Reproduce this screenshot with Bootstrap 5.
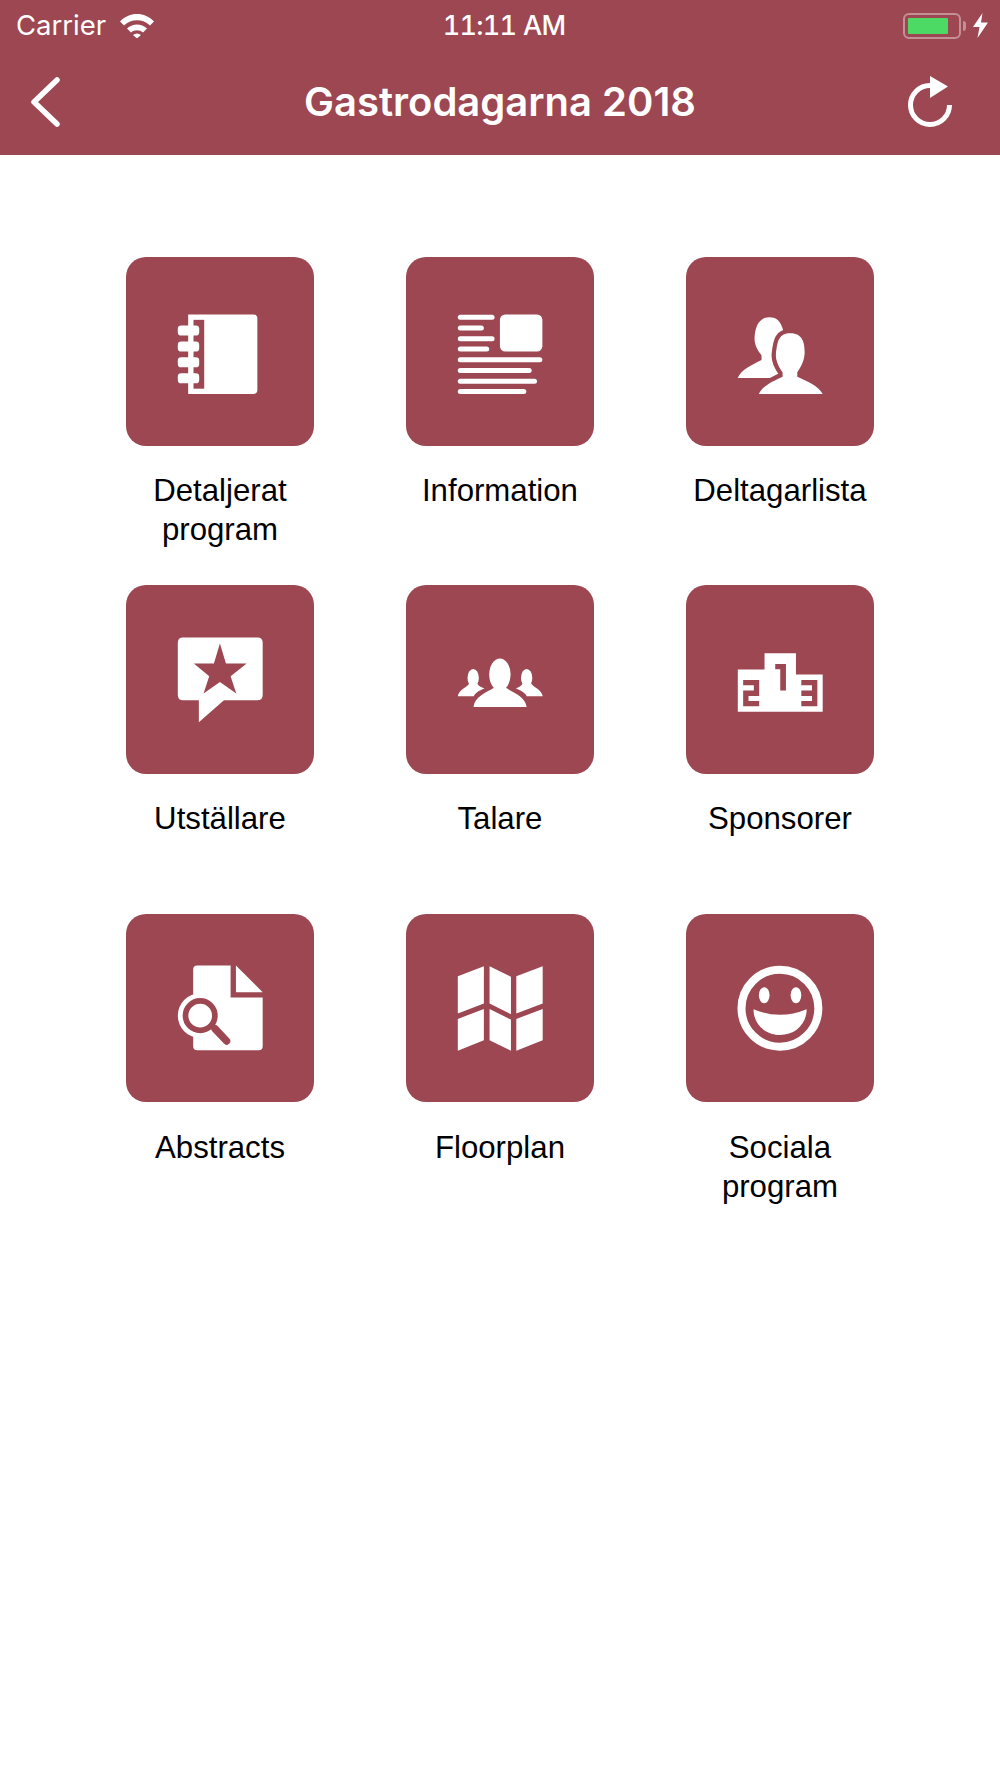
<!doctype html>
<html lang="sv">
<head>
<meta charset="utf-8">
<title>Gastrodagarna 2018</title>
<link rel="stylesheet" href="https://cdn.jsdelivr.net/npm/bootstrap@5.3.0/dist/css/bootstrap.min.css">
<style>
body { font-family: "Liberation Sans", Arial, sans-serif; background: #fff; }
.app-head { background: #9c4751; color: #fff; height: 155px; font-family: Inter, "Liberation Sans", sans-serif; }
.status-row { height: 50px; padding: 1px 12px 0 16px; font-size: 27.5px; }
.status-left { width: 304px; }
.status-right { width: 300px; }
.status-time { font-weight: 500; font-size: 27px; font-variant-numeric: tabular-nums; letter-spacing: -.7px; padding-top: 2px; }
.wifi-icon { width: 34px; height: 24px; margin-left: 14px; }
.batt-box { width: 58px; height: 26px; border: 2px solid rgba(255,255,255,.4); border-radius: 6px; padding: 3px; }
.batt-fill { width: 40px; height: 100%; background: #4cd964; border-radius: 1px; }
.batt-nub { width: 3px; height: 10px; background: rgba(255,255,255,.4); margin-left: 2px; margin-right: 7px; border-radius: 0 3px 3px 0; }
.bolt-icon { width: 15px; height: 25px; }
.title-row { height: 105px; padding: 0 48px 2px 31px; }
.title-row h1 { font-size: 40px; font-weight: 600; margin: 0; }
.side-left { width: 61px; }
.side-right { width: 44px; }
.back-icon { width: 30px; height: 50px; }
.reload-icon { width: 44px; height: 52px; }
.menu-wrap { width: 840px; padding-top: 102px; }
.menu-cell { height: 328.4px; }
.menu-tile { width: 188.5px; height: 188.5px; background: #9c4751; border-radius: 20px; }
.menu-tile svg { width: 188.5px; height: 188.5px; fill: #fff; }
.menu-label { width: 188px; margin-top: 25.5px; font-size: 31.2px; line-height: 39px; color: #000; text-align: center; }
.cut { fill: #9c4751; }
.cut-line { fill: none; stroke: #9c4751; }
</style>
</head>
<body>
<header class="app-head">
  <div class="status-row d-flex align-items-center justify-content-between">
    <div class="status-left d-flex align-items-center">
      <span>Carrier</span>
      <svg class="wifi-icon" viewBox="0 0 34 24"><path d="M0 7.5C9-2.5 25-2.5 34 7.500L30 11.500C23 4.500 11 4.500 4 11.500Z" fill="#fff"/><path d="M7 14.500C13 9 21 9 27 14.500L23 18.500C19.500 15.500 14.500 15.500 11 18.500Z" fill="#fff"/><path d="M13 21C15.500 19 18.500 19 21 21L17 24.500Z" fill="#fff"/></svg>
    </div>
    <span class="status-time">11:11 AM</span>
    <div class="status-right d-flex align-items-center justify-content-end">
      <div class="batt-box"><div class="batt-fill"></div></div>
      <div class="batt-nub"></div>
      <svg class="bolt-icon" viewBox="0 0 15 25"><path d="M9.500 0L0 14H6.500L4.500 25L15 9.500H8Z" fill="#fff"/></svg>
    </div>
  </div>
  <div class="title-row d-flex align-items-center justify-content-between">
    <div class="side-left">
      <svg class="back-icon d-block" viewBox="0 0 30 50"><path d="M26 3L3 25L26 47" fill="none" stroke="#fff" stroke-width="5.500" stroke-linecap="round" stroke-linejoin="round"/></svg>
    </div>
    <h1>Gastrodagarna 2018</h1>
    <div class="side-right">
      <svg class="reload-icon d-block" viewBox="0 0 44 52"><path d="M22 9.500A19.500 19.500 0 1 0 41.500 29" fill="none" stroke="#fff" stroke-width="5"/><path d="M22 0L40 10.500L22 22Z" fill="#fff"/></svg>
    </div>
  </div>
</header>

<main class="menu-wrap mx-auto">
  <div class="row g-0">
    <div class="col-4 menu-cell d-flex flex-column align-items-center">
      <div class="menu-tile">
        <svg viewBox="19 20 564 564">
          <path d="M205 192H400Q412 192 412 204V418Q412 430 400 430H205Z"/>
          <rect class="cut" x="221" y="208" width="32" height="206"/>
          <rect x="174" y="225" width="64" height="30" rx="10"/>
          <rect x="174" y="273" width="64" height="30" rx="10"/>
          <rect x="174" y="320" width="64" height="30" rx="10"/>
          <rect x="174" y="368" width="64" height="30" rx="10"/>
        </svg>
      </div>
      <div class="menu-label">Detaljerat program</div>
    </div>
    <div class="col-4 menu-cell d-flex flex-column align-items-center">
      <div class="menu-tile">
        <svg viewBox="17 20 564 564">
          <rect x="172" y="193" width="110" height="15" rx="7.500"/>
          <rect x="172" y="225" width="78" height="15" rx="7.500"/>
          <rect x="172" y="257" width="110" height="15" rx="7.500"/>
          <rect x="172" y="288" width="94" height="15" rx="7.500"/>
          <rect x="172" y="320" width="253" height="15" rx="7.500"/>
          <rect x="172" y="352" width="221" height="15" rx="7.500"/>
          <rect x="172" y="384" width="237" height="15" rx="7.500"/>
          <rect x="172" y="415" width="205" height="15" rx="7.500"/>
          <rect x="298" y="192" width="127" height="111" rx="16"/>
        </svg>
      </div>
      <div class="menu-label">Information</div>
    </div>
    <div class="col-4 menu-cell d-flex flex-column align-items-center">
      <div class="menu-tile">
        <svg viewBox="17 20 564 564">
          <path d="M172 382C180 358 215 342 243 328V314C232 300 222 285 222 262C224 222 240 200 266 200C290 200 300 212 308 240L310 382Z"/>
          <path d="M235 430C245 405 280 390 306 378V365C295 350 285 330 286 312C290 270 295 248 330 248C365 248 372 275 372 305C372 330 360 350 350 365V378C375 390 415 405 426 430Z" stroke="#9c4751" stroke-width="26" paint-order="stroke"/>
        </svg>
      </div>
      <div class="menu-label">Deltagarlista</div>
    </div>

    <div class="col-4 menu-cell d-flex flex-column align-items-center">
      <div class="menu-tile">
        <svg viewBox="19 15 564 564">
          <path d="M190 172H412Q428 172 428 188V344Q428 360 412 360H312L237 426V360H190Q174 360 174 344V188Q174 172 190 172Z"/>
          <polygon class="cut" points="300,190 318,250 380,250 332,288 349,340 300,305 251,340 268,288 222,250 282,250"/>
        </svg>
      </div>
      <div class="menu-label">Utställare</div>
    </div>
    <div class="col-4 menu-cell d-flex flex-column align-items-center">
      <div class="menu-tile">
        <svg viewBox="17 15 564 564">
          <ellipse cx="298" cy="283" rx="32" ry="48"/>
          <path d="M219 380C222 350 255 338 282 322H314C341 338 375 350 378 380Z"/>
          <ellipse cx="218" cy="293" rx="17" ry="27"/>
          <path d="M172 348C175 328 200 322 206 310H230C234 318 242 320 252 325C234 332 224 338 220 348Z"/>
          <ellipse cx="378" cy="293" rx="17" ry="27"/>
          <path d="M426 348C423 328 398 322 392 310H366C362 318 354 320 346 325C362 332 374 338 378 348Z"/>
        </svg>
      </div>
      <div class="menu-label">Talare</div>
    </div>
    <div class="col-4 menu-cell d-flex flex-column align-items-center">
      <div class="menu-tile">
        <svg viewBox="17 15 564 564">
          <path d="M252 268V219H346V283H426V394H172V268Z"/>
          <path class="cut" d="M284 251H316V331H299V267H284Z"/>
          <path class="cut" d="M188 299H236V347H204V362H236V378H188V331H220V315H188Z"/>
          <path class="cut" d="M362 299H410V378H362V362H394V347H362V331H394V315H362Z"/>
        </svg>
      </div>
      <div class="menu-label">Sponsorer</div>
    </div>

    <div class="col-4 menu-cell d-flex flex-column align-items-center">
      <div class="menu-tile">
        <svg viewBox="19 12 564 564">
          <path d="M232 166H332V262H428V408Q428 420 416 420H232Q220 420 220 408V178Q220 166 232 166Z"/>
          <polygon points="348,166 428,246 348,246"/>
          <circle cx="241" cy="316" r="67"/>
          <circle class="cut-line" cx="241" cy="316" r="44" stroke-width="17"/>
          <path class="cut-line" d="M285 355L320 392" stroke-width="22" stroke-linecap="round"/>
        </svg>
      </div>
      <div class="menu-label">Abstracts</div>
    </div>
    <div class="col-4 menu-cell d-flex flex-column align-items-center">
      <div class="menu-tile">
        <svg viewBox="17 12 564 564">
          <polygon points="172,198 250,168 250,280 172,310"/>
          <polygon points="267,168 331,200 331,312 267,280"/>
          <polygon points="347,198 426,168 426,280 347,310"/>
          <polygon points="172,326 250,296 250,390 172,421"/>
          <polygon points="267,296 331,328 331,421 267,390"/>
          <polygon points="347,326 426,296 426,390 347,421"/>
        </svg>
      </div>
      <div class="menu-label">Floorplan</div>
    </div>
    <div class="col-4 menu-cell d-flex flex-column align-items-center">
      <div class="menu-tile">
        <svg viewBox="17 12 564 564">
          <circle cx="298" cy="294" r="115" fill="none" stroke="#fff" stroke-width="24"/>
          <ellipse cx="251" cy="255" rx="16" ry="24"/>
          <ellipse cx="346" cy="255" rx="16" ry="24"/>
          <path d="M219 297Q298 330 378 297C378 340 345 374 298 374C252 374 219 340 219 297Z"/>
        </svg>
      </div>
      <div class="menu-label">Sociala program</div>
    </div>
  </div>
</main>
<script src="https://cdn.jsdelivr.net/npm/bootstrap@5.3.0/dist/js/bootstrap.bundle.min.js"></script>
</body>
</html>
